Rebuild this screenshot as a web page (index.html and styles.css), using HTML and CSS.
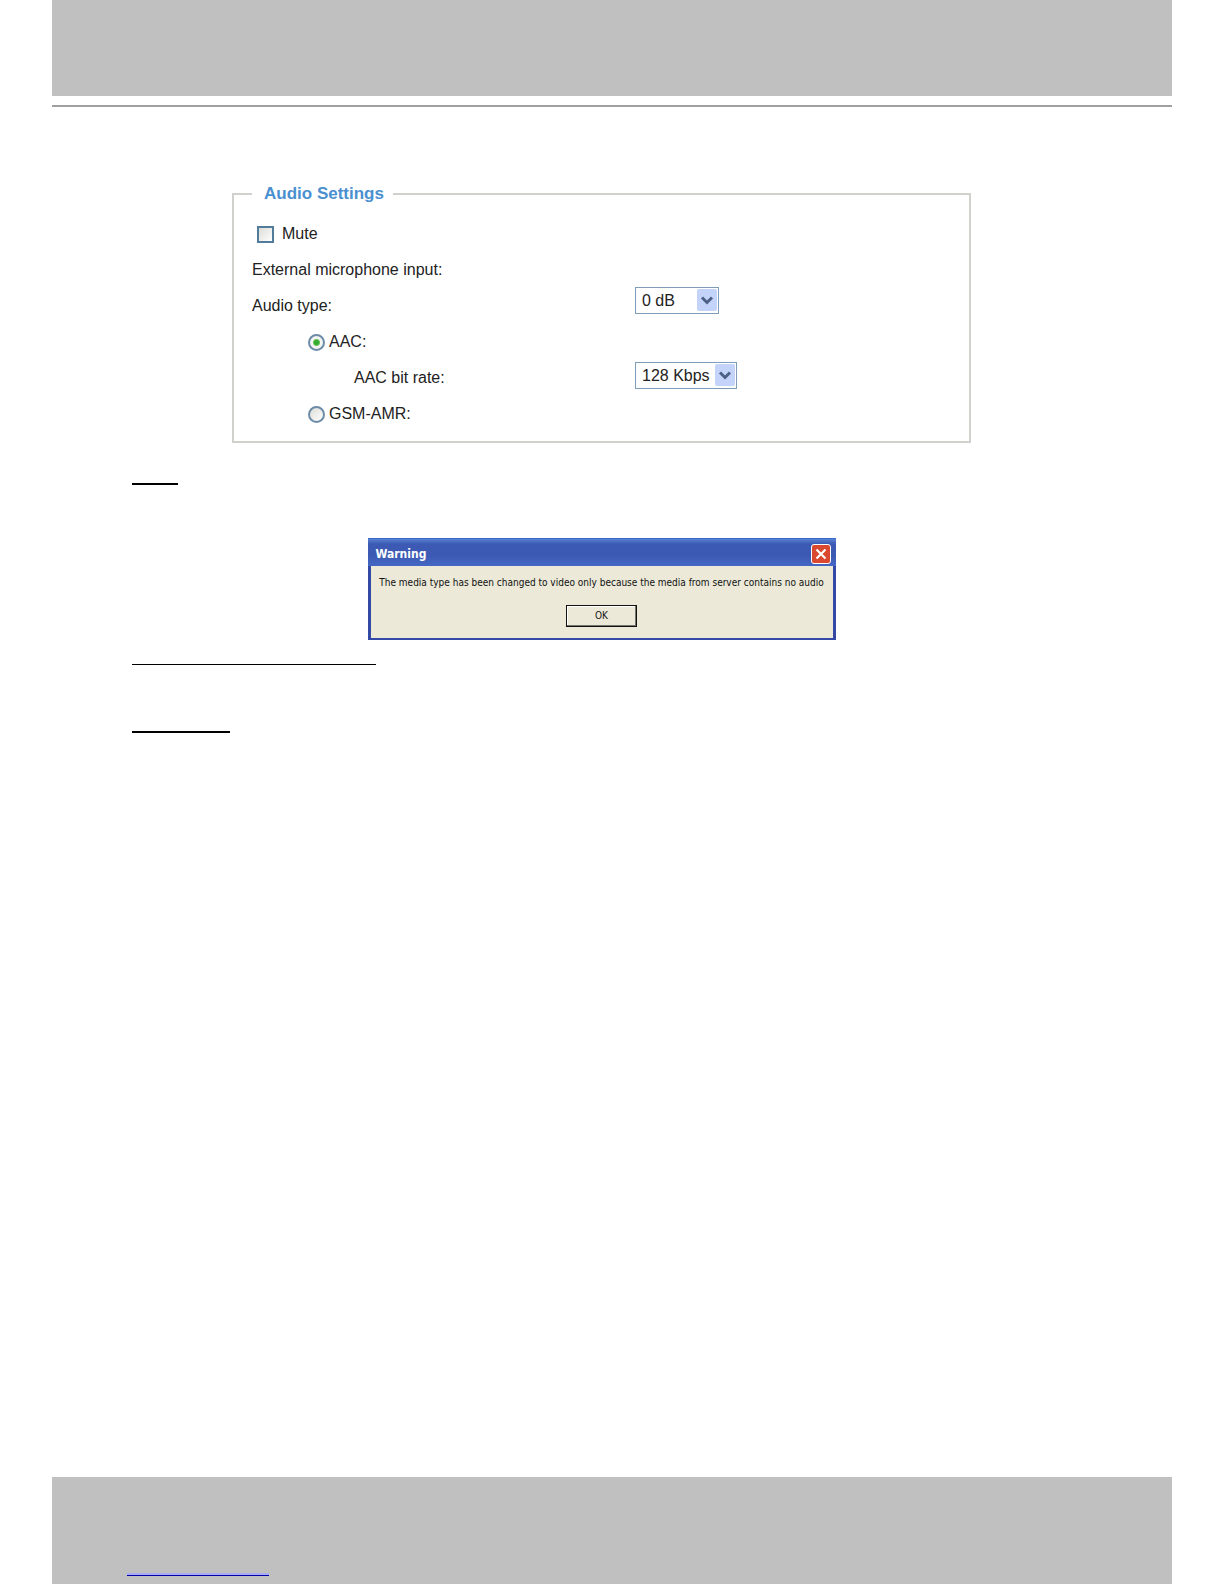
FILE: index.html
```html
<!DOCTYPE html>
<html lang="en">
<head>
<meta charset="utf-8">
<title>Audio Settings</title>
<link rel="stylesheet" href="styles.css">
</head>
<body>
<header class="band band-top"></header>
<hr class="header-rule">
<main class="content">
  <form class="figure">
    <fieldset class="settings">
      <legend class="settings-title">Audio Settings</legend>
      <div class="settings-grid">
        <div class="labels">
          <div class="row row-mute"><input class="check" type="checkbox" id="mute"><label for="mute">Mute</label></div>
          <div class="row"><label for="mic">External microphone input:</label></div>
          <div class="row">Audio type:</div>
          <div class="row row-type"><input class="radio" type="radio" name="type" id="aac" checked><label for="aac">AAC:</label></div>
          <div class="row row-rate"><label for="rate">AAC bit rate:</label></div>
          <div class="row row-type"><input class="radio" type="radio" name="type" id="gsm"><label for="gsm">GSM-AMR:</label></div>
        </div>
        <div class="selects">
          <div class="picker picker-short">
            <select class="select" id="mic"><option>0 dB</option></select>
            <svg class="arrow" viewBox="0 0 20 22" aria-hidden="true"><rect width="20" height="22" rx="2" fill="#c3d3fa"/><path d="M5 8.5l5 5 5-5" fill="none" stroke="#4d6185" stroke-width="3"/></svg>
          </div>
          <div class="picker picker-long">
            <select class="select" id="rate"><option>128 Kbps</option></select>
            <svg class="arrow" viewBox="0 0 20 22" aria-hidden="true"><rect width="20" height="22" rx="2" fill="#c3d3fa"/><path d="M5 8.5l5 5 5-5" fill="none" stroke="#4d6185" stroke-width="3"/></svg>
          </div>
        </div>
      </div>
    </fieldset>
  </form>
  <hr class="line line-mute">
  <div class="figure">
    <section class="dialog" role="dialog" aria-labelledby="dialog-title">
      <div class="titlebar">
        <h2 class="dialog-title" id="dialog-title">Warning</h2>
        <button class="close" type="button" aria-label="Close"><svg class="cross" viewBox="0 0 18 18" aria-hidden="true"><path d="M4.500 4.500l9 9M13.500 4.500l-9 9" stroke="#fff" stroke-width="2.200"/></svg></button>
      </div>
      <div class="dialog-body">
        <p class="message">The media type has been changed to video only because the media from server contains no audio</p>
        <button class="ok" type="button">OK</button>
      </div>
    </section>
  </div>
  <hr class="line line-input">
  <hr class="line line-type">
</main>
<footer class="band band-bottom"><hr class="footer-line"></footer>
</body>
</html>
```

FILE: styles.css
```css
* { box-sizing: border-box; }

body {
  display: flex;
  flex-direction: column;
  min-height: 100vh;
  margin: 0;
  padding: 0 52px;
  background: #fff;
  color: #222;
  font: 16px/20px "Liberation Sans", Arial, sans-serif;
}

hr { margin: 0; border: 0; }

.band { background: #c0c0c0; }
.band-top { height: 96px; }
.band-bottom { height: 107px; padding: 96px 75px 0; }

.header-rule {
  height: 2px;
  margin-top: 9px;
  background: #a0a0a0;
}

.content { flex: 1; padding-top: 77px; }
.figure { margin: 0 201px 0 180px; }

.settings {
  min-width: 0;
  margin: 0;
  padding: 12px 18px 9px;
  border: 2px solid #d0d0cc;
}
.settings-title {
  padding: 0 9px 0 12px;
  color: #4a90d0;
  font-size: 17px;
  font-weight: bold;
}
.settings-grid {
  display: grid;
  grid-template-columns: 383px 1fr;
}
.labels {
  display: grid;
  grid-auto-rows: 36px;
}
.row { display: flex; align-items: center; }
.row-mute { gap: 8px; padding-left: 5px; }
.row-type { gap: 4px; padding-left: 56px; }
.row-rate { padding-left: 102px; }

.check,
.radio {
  appearance: none;
  width: 17px;
  height: 17px;
  margin: 0;
  border: 2px solid #527c9c;
  background: linear-gradient(135deg, #dcdcd7, #fff);
}
.radio {
  border-color: #6d8ca8;
  border-radius: 50%;
}
.radio:checked {
  background: radial-gradient(circle, #36ac2e 0 2px, #61c059 3px, #f4f5f2 4px);
}

.selects {
  display: flex;
  flex-direction: column;
  gap: 48px;
  padding-top: 71px;
}
.picker { position: relative; height: 27px; }
.picker-short { width: 84px; }
.picker-long { width: 102px; }
.select {
  appearance: none;
  width: 100%;
  height: 100%;
  padding: 0 6px;
  border: 1px solid #7f9db9;
  border-radius: 0;
  background: #fff;
  color: #222;
  font: inherit;
}
.arrow {
  position: absolute;
  top: 2px;
  right: 2px;
  width: 20px;
  height: 22px;
  pointer-events: none;
}

.line { margin-left: 80px; background: #000; }
.line-mute { width: 46px; height: 2px; margin-top: 40px; margin-bottom: 53px; }
.line-input { width: 244px; height: 1px; margin-top: 24px; }
.line-type { width: 98px; height: 2px; margin-top: 66px; }

.dialog {
  max-width: 468px;
  margin: 0 auto;
  border: solid #3448a6;
  border-width: 0 3px 2px;
  background: #ece9d8;
  color: #111;
  font: 10px/14px "DejaVu Sans Condensed", "DejaVu Sans", sans-serif;
}
.titlebar {
  display: flex;
  align-items: center;
  justify-content: space-between;
  height: 28px;
  margin: 0 -3px;
  padding: 3px 5px 0 8px;
  border-top: 1px solid #3a68c8;
  background: linear-gradient(#5682d4, #3c5ab4 5px, #3c5ab4 17px, #4468c4);
}
.dialog-title {
  margin: 0;
  color: #fff;
  font-size: 12px;
  font-weight: bold;
}
.close {
  display: grid;
  width: 20px;
  height: 20px;
  padding: 0;
  border: 1px solid #fff;
  border-radius: 3px;
  background: #d9482f;
}
.cross { width: 18px; height: 18px; }
.dialog-body {
  display: flex;
  flex-direction: column;
  align-items: center;
  gap: 15px;
  padding: 10px 6px 11px;
}
.message { margin: 0; white-space: nowrap; }
.ok {
  width: 71px;
  height: 22px;
  padding: 0;
  border: 1px solid #111;
  background: #ece9d8;
  box-shadow: inset -1px -1px #77756b, inset 1px 1px #fff;
  color: #111;
  font: inherit;
}

.footer-line {
  width: 142px;
  height: 3px;
  border-top: 2px solid #aaaaf0;
  background: #0000a8;
}
```
